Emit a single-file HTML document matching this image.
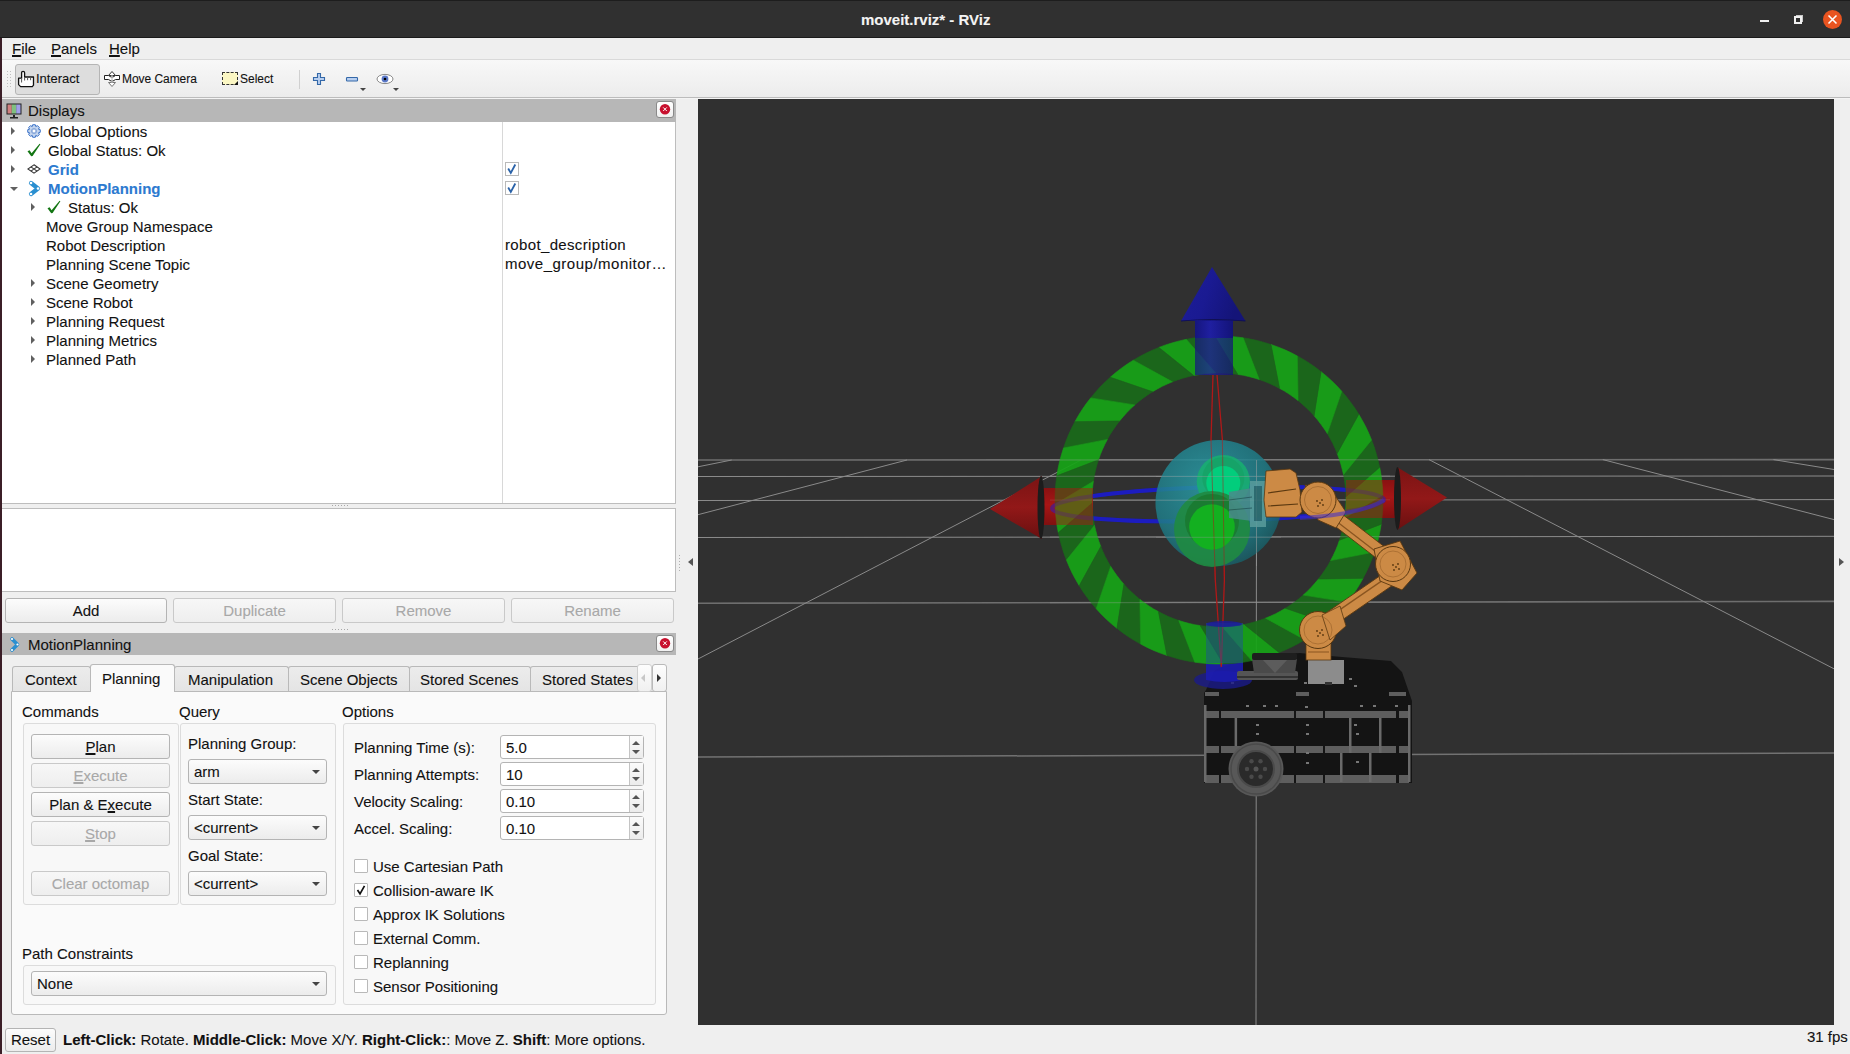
<!DOCTYPE html>
<html><head><meta charset="utf-8"><style>
*{box-sizing:border-box;margin:0;padding:0}
html,body{width:1850px;height:1054px;overflow:hidden;background:#efefef;font-family:"Liberation Sans",sans-serif;color:#111;-webkit-text-stroke:0.1px currentColor}
.a{position:absolute}
.t{position:absolute;white-space:nowrap;font-size:15px;line-height:18px;-webkit-text-stroke:0.1px currentColor}
.ts{position:absolute;white-space:nowrap;font-size:13px;line-height:18px}
u{text-decoration:underline;text-decoration-thickness:2px;text-underline-offset:1px;text-decoration-skip-ink:none}
.btn{position:absolute;background:linear-gradient(#fcfcfc,#ececec);border:1px solid #b4b4b4;border-radius:3px;font-size:15px;text-align:center;line-height:23px;white-space:nowrap;color:#111}
.dis{color:#a8a8a8;border-color:#c9c9c9;background:linear-gradient(#f7f7f7,#eeeeee)}
.dis u{text-decoration-color:#a8a8a8}
.combo{position:absolute;background:linear-gradient(#fcfcfc,#ececec);border:1px solid #b4b4b4;border-radius:3px;font-size:15px;line-height:23px;padding-left:5px;color:#111;white-space:nowrap}
.combo i{position:absolute;right:6px;top:10px;width:0;height:0;border-left:4px solid transparent;border-right:4px solid transparent;border-top:4px solid #444}
.spin{position:absolute;background:#fff;border:1px solid #b4b4b4;border-radius:3px;font-size:15px;line-height:23px;padding-left:5px;color:#111}
.spin b{position:absolute;right:0;top:0;width:14px;height:100%;border-left:1px solid #c4c4c4;background:linear-gradient(#fbfbfb,#ececec)}
.spin b:before{content:"";position:absolute;left:2px;top:5px;border-left:4px solid transparent;border-right:4px solid transparent;border-bottom:4px solid #555}
.spin b:after{content:"";position:absolute;left:2px;top:14px;border-left:4px solid transparent;border-right:4px solid transparent;border-top:4px solid #555}
.cb{position:absolute;width:14px;height:14px;border:1px solid #b9b9b9;background:#fff;border-radius:1px}
.gb{position:absolute;border:1px solid #dcdcdc;border-radius:3px;background:#f8f8f8}
.ar{position:absolute;width:0;height:0;border-top:4px solid transparent;border-bottom:4px solid transparent;border-left:4px solid #606060}
.ad{position:absolute;width:0;height:0;border-left:4px solid transparent;border-right:4px solid transparent;border-top:4px solid #606060}
.tab{position:absolute;top:666px;height:25px;background:linear-gradient(#ececec,#e4e4e4);border:1px solid #b9b9b9;border-bottom:none;border-radius:3px 3px 0 0}
</style></head><body>
<div class="a" style="left:0;top:0;width:2px;height:1054px;background:#3b1e27"></div>
<div class="a" style="left:0;top:0;width:1850px;height:38px;background:#303030;border-top:1px solid #1d1d1d;border-bottom:1px solid #1a1a1a"></div>
<div class="t" style="left:861px;top:11px;color:#f4f4f4;font-weight:bold">moveit.rviz* - RViz</div>
<div class="a" style="left:1760px;top:20px;width:9px;height:2px;background:#f0f0f0"></div>
<div class="a" style="left:1794px;top:16px;width:8px;height:8px;border:2px solid #f0f0f0"></div>
<div class="a" style="left:1796px;top:15px;width:7px;height:7px;border-top:1px solid #c8c8c8;border-right:1px solid #c8c8c8"></div>
<div class="a" style="left:1823px;top:10px;width:19px;height:19px;border-radius:50%;background:#e95420"></div>
<svg class="a" style="left:1823px;top:10px" width="19" height="19"><path d="M5.5 5.5L13.5 13.5M13.5 5.5L5.5 13.5" stroke="#fff" stroke-width="1.6"/></svg>
<div class="a" style="left:2px;top:38px;width:1848px;height:21px;background:#efefef"></div>
<div class="a" style="left:2px;top:59px;width:1848px;height:1px;background:#d9d9d9"></div>
<div class="t" style="left:12px;top:40px;"><u>F</u>ile</div>
<div class="t" style="left:51px;top:40px;"><u>P</u>anels</div>
<div class="t" style="left:109px;top:40px;"><u>H</u>elp</div>
<div class="a" style="left:2px;top:60px;width:1848px;height:37px;background:linear-gradient(#f8f8f8,#ececec)"></div>
<div class="a" style="left:2px;top:97px;width:1848px;height:1px;background:#bcbcbc"></div>
<div class="a" style="left:2px;top:98px;width:1848px;height:1px;background:#f4f4f4"></div>
<div class="a" style="left:7px;top:71px;width:1px;height:1px;background:#c0c0c0"></div>
<div class="a" style="left:10px;top:71px;width:1px;height:1px;background:#c0c0c0"></div>
<div class="a" style="left:7px;top:74px;width:1px;height:1px;background:#c0c0c0"></div>
<div class="a" style="left:10px;top:74px;width:1px;height:1px;background:#c0c0c0"></div>
<div class="a" style="left:7px;top:77px;width:1px;height:1px;background:#c0c0c0"></div>
<div class="a" style="left:10px;top:77px;width:1px;height:1px;background:#c0c0c0"></div>
<div class="a" style="left:7px;top:80px;width:1px;height:1px;background:#c0c0c0"></div>
<div class="a" style="left:10px;top:80px;width:1px;height:1px;background:#c0c0c0"></div>
<div class="a" style="left:7px;top:83px;width:1px;height:1px;background:#c0c0c0"></div>
<div class="a" style="left:10px;top:83px;width:1px;height:1px;background:#c0c0c0"></div>
<div class="a" style="left:7px;top:86px;width:1px;height:1px;background:#c0c0c0"></div>
<div class="a" style="left:10px;top:86px;width:1px;height:1px;background:#c0c0c0"></div>
<div class="a" style="left:15px;top:64px;width:85px;height:31px;background:#dddddd;border:1px solid #b5b5b5;border-radius:3px"></div>
<svg class="a" style="left:17px;top:70px" width="19" height="19"><path d="M4.6 8.5 V2.8 Q4.6 1.3 6.1 1.3 Q7.6 1.3 7.6 2.8 V7 H16.5 V15.2 L15.3 16.6 H3.6 L1.6 14.6 V8.2 H4.6" fill="#fff" stroke="#111" stroke-width="1.3" stroke-linejoin="round"/><path d="M4.6 8.2 V12.5 M7.6 7 V10.5 M10.6 7 V10.2 M13.6 7 V10.2" stroke="#555" stroke-width="1" fill="none"/></svg>
<div class="ts" style="left:36px;top:70px;color:#111">Interact</div>
<svg class="a" style="left:100px;top:66px" width="24" height="26"><path d="M8.5 16.5 L12 20.5 L15.5 16.5 Z" fill="#fff" stroke="#777" stroke-width="1"/><path d="M8.5 9.5 L12 5.5 L15.5 9.5 Z" fill="#fff" stroke="#333" stroke-width="1"/><path d="M4.5 9.5 L8.5 9.5 L11 11 L13 11 L15.5 9.5 L19.5 9.5 L19.5 13.5 L15.5 13.5 L13 15 L11 15 L8.5 13.5 L4.5 13.5 Z" fill="#fff" stroke="#222" stroke-width="1"/><path d="M12 9 V17" stroke="#bbb" stroke-width="1.2"/></svg>
<div class="ts" style="left:122px;top:70px;color:#111;font-size:12px;letter-spacing:-0.05px">Move Camera</div>
<div class="a" style="left:222px;top:72px;width:16px;height:13px;background:#fbf7c4;border:1px dashed #333"></div>
<div class="a" style="left:234px;top:81px;width:0;height:0;border-left:4px solid transparent;border-bottom:4px solid #111"></div>
<div class="ts" style="left:240px;top:70px;color:#111;font-size:12px">Select</div>
<div class="a" style="left:299px;top:70px;width:1px;height:19px;background:#d0d0d0"></div>
<svg class="a" style="left:312px;top:72px" width="15" height="15"><path d="M5.5 1.5h3v4h4v3h-4v4h-3v-4h-4v-3h4z" fill="#b8cff0" stroke="#3468a8" stroke-width="1.1"/></svg>
<svg class="a" style="left:345px;top:76px" width="15" height="7"><rect x="1.5" y="1.5" width="11" height="3.5" rx=".8" fill="#b8cff0" stroke="#3468a8" stroke-width="1.1"/></svg>
<div class="a" style="left:360px;top:88px;width:0;height:0;border-left:3px solid transparent;border-right:3px solid transparent;border-top:3px solid #444"></div>
<svg class="a" style="left:376px;top:73px" width="18" height="12"><ellipse cx="9" cy="6" rx="8" ry="4.6" fill="#fff" stroke="#888" stroke-width="1"/><circle cx="9" cy="6" r="3.4" fill="#5a78c8"/><circle cx="9" cy="6" r="1.3" fill="#000"/></svg>
<div class="a" style="left:393px;top:88px;width:0;height:0;border-left:3px solid transparent;border-right:3px solid transparent;border-top:3px solid #444"></div>
<div class="a" style="left:2px;top:99px;width:674px;height:23px;background:#b7b7b7"></div>
<svg class="a" style="left:6px;top:103px" width="17" height="16"><rect x="0.5" y="0.5" width="15" height="11" fill="#222"/><rect x="1.5" y="1.5" width="4.3" height="9" fill="#d08080"/><rect x="5.8" y="1.5" width="4.4" height="9" fill="#80c080"/><rect x="10.2" y="1.5" width="4.3" height="9" fill="#a0a0e8"/><rect x="7" y="12" width="2" height="2" fill="#222"/><rect x="4" y="14" width="8" height="1.5" fill="#222"/></svg>
<div class="t" style="left:28px;top:102px;">Displays</div>
<div class="a" style="left:656px;top:101px;width:18px;height:17px;background:linear-gradient(#fff,#f0f0f0);border:1px solid #8a8a8a;border-radius:3px"></div>
<svg class="a" style="left:656px;top:101px" width="18" height="17"><circle cx="9" cy="8.2" r="5.2" fill="#c8102e"/><path d="M7.2 6.4l3.6 3.6M10.8 6.4l-3.6 3.6" stroke="#fff" stroke-width="1"/></svg>
<div class="a" style="left:2px;top:122px;width:674px;height:382px;background:#fff;border-right:1px solid #bdbdbd;border-bottom:1px solid #bdbdbd"></div>
<div class="a" style="left:502px;top:122px;width:1px;height:381px;background:#d8d8d8"></div>
<div class="t" style="left:48px;top:123px;">Global Options</div>
<div class="ar" style="left:11px;top:127px"></div>
<div class="t" style="left:48px;top:142px;">Global Status: Ok</div>
<div class="ar" style="left:11px;top:146px"></div>
<div class="t" style="left:48px;top:161px;color:#2c7ad0;font-weight:bold">Grid</div>
<div class="ar" style="left:11px;top:165px"></div>
<div class="t" style="left:48px;top:180px;color:#2c7ad0;font-weight:bold">MotionPlanning</div>
<div class="ad" style="left:10px;top:187px"></div>
<div class="t" style="left:68px;top:199px;">Status: Ok</div>
<div class="ar" style="left:31px;top:203px"></div>
<div class="t" style="left:46px;top:218px;">Move Group Namespace</div>
<div class="t" style="left:46px;top:237px;">Robot Description</div>
<div class="t" style="left:46px;top:256px;">Planning Scene Topic</div>
<div class="t" style="left:46px;top:275px;">Scene Geometry</div>
<div class="ar" style="left:31px;top:279px"></div>
<div class="t" style="left:46px;top:294px;">Scene Robot</div>
<div class="ar" style="left:31px;top:298px"></div>
<div class="t" style="left:46px;top:313px;">Planning Request</div>
<div class="ar" style="left:31px;top:317px"></div>
<div class="t" style="left:46px;top:332px;">Planning Metrics</div>
<div class="ar" style="left:31px;top:336px"></div>
<div class="t" style="left:46px;top:351px;">Planned Path</div>
<div class="ar" style="left:31px;top:355px"></div>
<svg class="a" style="left:27px;top:124px" width="14" height="14"><path d="M11.42 5.14 L13.26 5.67 L13.26 8.33 L11.42 8.86 L11.44 8.81 L12.37 10.49 L10.49 12.37 L8.81 11.44 L8.86 11.42 L8.33 13.26 L5.67 13.26 L5.14 11.42 L5.19 11.44 L3.51 12.37 L1.63 10.49 L2.56 8.81 L2.58 8.86 L0.74 8.33 L0.74 5.67 L2.58 5.14 L2.56 5.19 L1.63 3.51 L3.51 1.63 L5.19 2.56 L5.14 2.58 L5.67 0.74 L8.33 0.74 L8.86 2.58 L8.81 2.56 L10.49 1.63 L12.37 3.51 L11.44 5.19Z" fill="#c2d4ee" stroke="#3a72c8" stroke-width="1" stroke-linejoin="round"/><circle cx="7" cy="7" r="2.6" fill="#a8bfe4" stroke="#6a90d0" stroke-width="0.6"/><circle cx="7" cy="7" r="1.2" fill="#fff"/></svg>
<svg class="a" style="left:27px;top:143px" width="14" height="14"><path d="M0.5 8.2 L2.6 7.2 L4.6 10.2 L12.6 0.8 L13.4 1.3 L5.6 12.9 L4.2 13.2 Z" fill="#127512"/></svg>
<svg class="a" style="left:47px;top:200px" width="14" height="14"><path d="M0.5 8.2 L2.6 7.2 L4.6 10.2 L12.6 0.8 L13.4 1.3 L5.6 12.9 L4.2 13.2 Z" fill="#127512"/></svg>
<svg class="a" style="left:27px;top:164px" width="14" height="10"><g fill="none" stroke="#333" stroke-width="1.1"><path d="M7 0.8L13.2 5 7 9.2 0.8 5z"/><path d="M3.9 2.9L10.1 7.1M10.1 2.9L3.9 7.1"/></g></svg>
<svg class="a" style="left:28px;top:180px" width="14" height="17"><path d="M3 3L10 8.5 3 14" fill="none" stroke="#2a8fd0" stroke-width="4.2" stroke-linecap="round" stroke-linejoin="round"/><circle cx="3" cy="3" r="1.3" fill="#fff"/><circle cx="10" cy="8.5" r="1.3" fill="#fff"/><circle cx="3" cy="14" r="1.3" fill="#fff"/></svg>
<div class="a" style="left:505px;top:162px;width:14px;height:14px;border:1px solid #b9b9b9;background:#fff"></div>
<svg class="a" style="left:505px;top:162px" width="14" height="14"><path d="M3.2 6.5l2.6 4.5 4.5-8.5" fill="none" stroke="#2a62a8" stroke-width="1.8"/></svg>
<div class="a" style="left:505px;top:181px;width:14px;height:14px;border:1px solid #b9b9b9;background:#fff"></div>
<svg class="a" style="left:505px;top:181px" width="14" height="14"><path d="M3.2 6.5l2.6 4.5 4.5-8.5" fill="none" stroke="#2a62a8" stroke-width="1.8"/></svg>
<div class="t" style="left:505px;top:236px;letter-spacing:0.35px">robot_description</div>
<div class="t" style="left:505px;top:255px;letter-spacing:0.5px">move_group/monitor…</div>
<div class="a" style="left:332px;top:505px;width:1px;height:1px;background:#a8a8a8"></div>
<div class="a" style="left:332px;top:629px;width:1px;height:1px;background:#a8a8a8"></div>
<div class="a" style="left:335px;top:505px;width:1px;height:1px;background:#a8a8a8"></div>
<div class="a" style="left:335px;top:629px;width:1px;height:1px;background:#a8a8a8"></div>
<div class="a" style="left:338px;top:505px;width:1px;height:1px;background:#a8a8a8"></div>
<div class="a" style="left:338px;top:629px;width:1px;height:1px;background:#a8a8a8"></div>
<div class="a" style="left:341px;top:505px;width:1px;height:1px;background:#a8a8a8"></div>
<div class="a" style="left:341px;top:629px;width:1px;height:1px;background:#a8a8a8"></div>
<div class="a" style="left:344px;top:505px;width:1px;height:1px;background:#a8a8a8"></div>
<div class="a" style="left:344px;top:629px;width:1px;height:1px;background:#a8a8a8"></div>
<div class="a" style="left:347px;top:505px;width:1px;height:1px;background:#a8a8a8"></div>
<div class="a" style="left:347px;top:629px;width:1px;height:1px;background:#a8a8a8"></div>
<div class="a" style="left:2px;top:508px;width:674px;height:84px;background:#fff;border:1px solid #bdbdbd;border-left:none"></div>
<div class="btn" style="left:5px;top:598px;width:162px;height:25px">Add</div>
<div class="btn dis" style="left:173px;top:598px;width:163px;height:25px">Duplicate</div>
<div class="btn dis" style="left:342px;top:598px;width:163px;height:25px">Remove</div>
<div class="btn dis" style="left:511px;top:598px;width:163px;height:25px">Rename</div>
<div class="a" style="left:2px;top:633px;width:674px;height:22px;background:#b7b7b7"></div>
<svg class="a" style="left:9px;top:636px" width="12" height="17"><path d="M3 3L8.5 8.5 3 14" fill="none" stroke="#2a8fd0" stroke-width="3.6" stroke-linecap="round" stroke-linejoin="round"/><circle cx="3" cy="3" r="1.1" fill="#fff"/><circle cx="8.5" cy="8.5" r="1.1" fill="#fff"/><circle cx="3" cy="14" r="1.1" fill="#fff"/></svg>
<div class="t" style="left:28px;top:636px;">MotionPlanning</div>
<div class="a" style="left:656px;top:635px;width:18px;height:17px;background:linear-gradient(#fff,#f0f0f0);border:1px solid #8a8a8a;border-radius:3px"></div>
<svg class="a" style="left:656px;top:635px" width="18" height="17"><circle cx="9" cy="8.2" r="5.2" fill="#c8102e"/><path d="M7.2 6.4l3.6 3.6M10.8 6.4l-3.6 3.6" stroke="#fff" stroke-width="1"/></svg>
<div class="a" style="left:11px;top:691px;width:656px;height:324px;background:#fafafa;border:1px solid #b9b9b9;border-radius:0 0 3px 3px"></div>
<div class="tab" style="left:12px;width:79px"></div>
<div class="t" style="left:25px;top:671px;">Context</div>
<div class="tab" style="left:174px;width:115px"></div>
<div class="t" style="left:188px;top:671px;">Manipulation</div>
<div class="tab" style="left:288px;width:122px"></div>
<div class="t" style="left:300px;top:671px;">Scene Objects</div>
<div class="tab" style="left:409px;width:122px"></div>
<div class="t" style="left:420px;top:671px;">Stored Scenes</div>
<div class="tab" style="left:530px;width:111px"></div>
<div class="t" style="left:542px;top:671px;">Stored States</div>
<div class="a" style="left:90px;top:664px;width:85px;height:28px;background:#fafafa;border:1px solid #b9b9b9;border-bottom:none;border-radius:3px 3px 0 0"></div>
<div class="t" style="left:102px;top:670px;">Planning</div>
<div class="a" style="left:637px;top:664px;width:15px;height:28px;background:linear-gradient(#fdfdfd,#f0f0f0);border:1px solid #d0d0d0;border-radius:3px"></div>
<div class="a" style="left:641px;top:674px;border-top:4px solid transparent;border-bottom:4px solid transparent;border-right:4px solid #c8c8c8"></div>
<div class="a" style="left:652px;top:664px;width:15px;height:28px;background:linear-gradient(#fdfdfd,#f0f0f0);border:1px solid #b9b9b9;border-radius:3px"></div>
<div class="a" style="left:657px;top:674px;border-top:4px solid transparent;border-bottom:4px solid transparent;border-left:4px solid #333"></div>
<div class="t" style="left:22px;top:703px;">Commands</div>
<div class="t" style="left:179px;top:703px;">Query</div>
<div class="t" style="left:342px;top:703px;">Options</div>
<div class="gb" style="left:23px;top:723px;width:156px;height:182px"></div>
<div class="gb" style="left:180px;top:723px;width:156px;height:182px"></div>
<div class="gb" style="left:343px;top:723px;width:313px;height:282px"></div>
<div class="btn" style="left:31px;top:734px;width:139px;height:25px"><u>P</u>lan</div>
<div class="btn dis" style="left:31px;top:763px;width:139px;height:25px"><u>E</u>xecute</div>
<div class="btn" style="left:31px;top:792px;width:139px;height:25px">Plan &amp; E<u>x</u>ecute</div>
<div class="btn dis" style="left:31px;top:821px;width:139px;height:25px"><u>S</u>top</div>
<div class="btn dis" style="left:31px;top:871px;width:139px;height:25px">Clear octomap</div>
<div class="t" style="left:188px;top:735px;">Planning Group:</div>
<div class="combo" style="left:188px;top:759px;width:139px;height:25px">arm<i></i></div>
<div class="t" style="left:188px;top:791px;">Start State:</div>
<div class="combo" style="left:188px;top:815px;width:139px;height:25px">&lt;current&gt;<i></i></div>
<div class="t" style="left:188px;top:847px;">Goal State:</div>
<div class="combo" style="left:188px;top:871px;width:139px;height:25px">&lt;current&gt;<i></i></div>
<div class="t" style="left:22px;top:945px;">Path Constraints</div>
<div class="gb" style="left:23px;top:965px;width:313px;height:40px"></div>
<div class="combo" style="left:31px;top:971px;width:296px;height:25px">None<i></i></div>
<div class="t" style="left:354px;top:739px;">Planning Time (s):</div>
<div class="spin" style="left:500px;top:735px;width:144px;height:24px">5.0<b></b></div>
<div class="t" style="left:354px;top:766px;">Planning Attempts:</div>
<div class="spin" style="left:500px;top:762px;width:144px;height:24px">10<b></b></div>
<div class="t" style="left:354px;top:793px;">Velocity Scaling:</div>
<div class="spin" style="left:500px;top:789px;width:144px;height:24px">0.10<b></b></div>
<div class="t" style="left:354px;top:820px;">Accel. Scaling:</div>
<div class="spin" style="left:500px;top:816px;width:144px;height:24px">0.10<b></b></div>
<div class="cb" style="left:354px;top:859px"></div>
<div class="t" style="left:373px;top:858px;">Use Cartesian Path</div>
<div class="cb" style="left:354px;top:883px"></div>
<svg class="a" style="left:354px;top:883px" width="14" height="14"><path d="M3.5 7l2.5 3.8 4.5-8" fill="none" stroke="#111" stroke-width="1.7"/></svg>
<div class="t" style="left:373px;top:882px;">Collision-aware IK</div>
<div class="cb" style="left:354px;top:907px"></div>
<div class="t" style="left:373px;top:906px;">Approx IK Solutions</div>
<div class="cb" style="left:354px;top:931px"></div>
<div class="t" style="left:373px;top:930px;">External Comm.</div>
<div class="cb" style="left:354px;top:955px"></div>
<div class="t" style="left:373px;top:954px;">Replanning</div>
<div class="cb" style="left:354px;top:979px"></div>
<div class="t" style="left:373px;top:978px;">Sensor Positioning</div>
<div class="btn" style="left:5px;top:1028px;width:51px;height:24px;line-height:22px">Reset</div>
<div class="t" style="left:63px;top:1031px"><b>Left-Click:</b> Rotate. <b>Middle-Click:</b> Move X/Y. <b>Right-Click:</b>: Move Z. <b>Shift</b>: More options.</div>
<div class="t" style="left:1807px;top:1028px">31 fps</div>
<div class="a" style="left:688px;top:558px;border-top:4px solid transparent;border-bottom:4px solid transparent;border-right:5px solid #555"></div>
<div class="a" style="left:679px;top:555px;width:1px;height:1px;background:#b0b0b0"></div>
<div class="a" style="left:679px;top:558px;width:1px;height:1px;background:#b0b0b0"></div>
<div class="a" style="left:679px;top:561px;width:1px;height:1px;background:#b0b0b0"></div>
<div class="a" style="left:679px;top:564px;width:1px;height:1px;background:#b0b0b0"></div>
<div class="a" style="left:679px;top:567px;width:1px;height:1px;background:#b0b0b0"></div>
<div class="a" style="left:679px;top:570px;width:1px;height:1px;background:#b0b0b0"></div>
<div class="a" style="left:1839px;top:558px;border-top:4px solid transparent;border-bottom:4px solid transparent;border-left:5px solid #555"></div>
<svg class="a" style="left:698px;top:99px" width="1136" height="926" viewBox="698 99 1136 926">
<defs><radialGradient id="sph" cx="0.42" cy="0.36" r="0.68"><stop offset="0" stop-color="#2b9ca6"/><stop offset="0.7" stop-color="#1f7a85"/><stop offset="1" stop-color="#185a62"/></radialGradient><linearGradient id="redc" x1="0" y1="0" x2="0" y2="1"><stop offset="0" stop-color="#7a1414"/><stop offset="0.5" stop-color="#921818"/><stop offset="1" stop-color="#681010"/></linearGradient><linearGradient id="reds" x1="0" y1="0" x2="0" y2="1"><stop offset="0" stop-color="#6a1010"/><stop offset="0.45" stop-color="#a01818"/><stop offset="1" stop-color="#5a0d0d"/></linearGradient><linearGradient id="blu" x1="0" y1="0" x2="1" y2="0"><stop offset="0" stop-color="#15157e"/><stop offset="0.4" stop-color="#1f1fa0"/><stop offset="1" stop-color="#131378"/></linearGradient><linearGradient id="bluc" x1="0" y1="0" x2="1" y2="0.3"><stop offset="0" stop-color="#1d1d98"/><stop offset="0.5" stop-color="#1a1a92"/><stop offset="1" stop-color="#141478"/></linearGradient></defs>
<rect x="698" y="99" width="1136" height="926" fill="#303030"/>
<line x1="698" y1="460.0" x2="1834" y2="459.6" stroke="#6e6e6e" stroke-width="1.6" fill="none"/>
<line x1="698" y1="476.5" x2="1834" y2="476.0" stroke="#8c8c8c" stroke-width="1" fill="none"/>
<line x1="698" y1="500.5" x2="1834" y2="499.6" stroke="#8c8c8c" stroke-width="1" fill="none"/>
<line x1="698" y1="537.5" x2="1834" y2="536.3" stroke="#8c8c8c" stroke-width="1" fill="none"/>
<line x1="698" y1="603.2" x2="1834" y2="601.4" stroke="#6e6e6e" stroke-width="1.6" fill="none"/>
<line x1="698" y1="757" x2="1834" y2="753" stroke="#727272" stroke-width="1.5" fill="none"/>
<line x1="698" y1="466.8" x2="731.7" y2="460" stroke="#8a8a8a" stroke-width="1" fill="none"/>
<line x1="698" y1="514.7" x2="907" y2="460" stroke="#8a8a8a" stroke-width="1" fill="none"/>
<line x1="698" y1="659" x2="1081" y2="460" stroke="#8a8a8a" stroke-width="1" fill="none"/>
<line x1="1256.5" y1="460" x2="1256" y2="1025" stroke="#8a8a8a" stroke-width="1" fill="none"/>
<line x1="1429" y1="459.6" x2="1834" y2="668.8" stroke="#8a8a8a" stroke-width="1" fill="none"/>
<line x1="1602.8" y1="459.6" x2="1834" y2="519.6" stroke="#8a8a8a" stroke-width="1" fill="none"/>
<line x1="1773.4" y1="459.6" x2="1834" y2="469.5" stroke="#8a8a8a" stroke-width="1" fill="none"/>
<g>
<path d="M1204 693 L1204 783 L1412 783 L1412 701 L1402 672 L1391 661 L1330 656 L1300 653 L1250 656 L1215 670 L1206 690 Z" fill="#141414"/>
<rect x="1205" y="692" width="14" height="4" fill="#5e5e5e"/>
<rect x="1296" y="692" width="13" height="4" fill="#5e5e5e"/>
<rect x="1389" y="692" width="17" height="4" fill="#5e5e5e"/>
<rect x="1205" y="711" width="14" height="7" fill="#5e5e5e"/>
<rect x="1221" y="711" width="73" height="7" fill="#5e5e5e"/>
<rect x="1296" y="711" width="27" height="7" fill="#5e5e5e"/>
<rect x="1325" y="711" width="71" height="7" fill="#5e5e5e"/>
<rect x="1399" y="711" width="10" height="7" fill="#5e5e5e"/>
<rect x="1205" y="746" width="14" height="7" fill="#5e5e5e"/>
<rect x="1221" y="746" width="73" height="7" fill="#5e5e5e"/>
<rect x="1296" y="746" width="27" height="7" fill="#5e5e5e"/>
<rect x="1325" y="746" width="71" height="7" fill="#5e5e5e"/>
<rect x="1399" y="746" width="10" height="7" fill="#5e5e5e"/>
<rect x="1205" y="775" width="14" height="8" fill="#5e5e5e"/>
<rect x="1221" y="775" width="73" height="8" fill="#5e5e5e"/>
<rect x="1296" y="775" width="27" height="8" fill="#5e5e5e"/>
<rect x="1325" y="775" width="71" height="8" fill="#5e5e5e"/>
<rect x="1399" y="775" width="10" height="8" fill="#5e5e5e"/>
<rect x="1234.6" y="718" width="2.5" height="28" fill="#6a6a6a"/>
<rect x="1349" y="718" width="2.5" height="35" fill="#6a6a6a"/>
<rect x="1379" y="718" width="2.5" height="35" fill="#6a6a6a"/>
<rect x="1340" y="753" width="2.5" height="29" fill="#6a6a6a"/>
<rect x="1369" y="753" width="2.5" height="29" fill="#6a6a6a"/>
<rect x="1204" y="705" width="2.5" height="77" fill="#6a6a6a"/>
<rect x="1408" y="705" width="2.5" height="77" fill="#6a6a6a"/>
<rect x="1246" y="705" width="3" height="2" fill="#777"/>
<rect x="1263" y="705" width="3" height="2" fill="#777"/>
<rect x="1275" y="705" width="3" height="2" fill="#777"/>
<rect x="1305" y="706" width="3" height="2" fill="#777"/>
<rect x="1360" y="705" width="3" height="2" fill="#777"/>
<rect x="1373" y="705" width="3" height="2" fill="#777"/>
<rect x="1395" y="705" width="3" height="2" fill="#777"/>
<rect x="1256" y="724" width="3" height="2" fill="#777"/>
<rect x="1306" y="724" width="3" height="2" fill="#777"/>
<rect x="1354" y="724" width="3" height="2" fill="#777"/>
<rect x="1256" y="733" width="3" height="2" fill="#777"/>
<rect x="1306" y="733" width="3" height="2" fill="#777"/>
<rect x="1356" y="733" width="3" height="2" fill="#777"/>
<rect x="1306" y="752" width="3" height="2" fill="#777"/>
<rect x="1306" y="762" width="3" height="2" fill="#777"/>
<rect x="1356" y="761" width="3" height="2" fill="#777"/>
<rect x="1231" y="682" width="3" height="2" fill="#777"/>
<rect x="1304" y="682" width="3" height="2" fill="#777"/>
<rect x="1354" y="685" width="3" height="2" fill="#777"/>
<rect x="1349" y="678" width="3" height="2" fill="#777"/>
<rect x="1308" y="660" width="36" height="24" fill="#8c8c8c"/>
<rect x="1325" y="682" width="7" height="3" fill="#333"/>
<ellipse cx="1223" cy="680" rx="29" ry="9" fill="#1a1a8a" opacity="0.8"/>
<path d="M1206 662 L1243 662 L1243 680 Q1224 684 1206 680 Z" fill="#1c1cb0" opacity="0.9"/>
<circle cx="1256" cy="769" r="27.5" fill="#585858"/>
<circle cx="1256" cy="769" r="25" fill="none" stroke="#4a4a4a" stroke-width="1.5"/>
<circle cx="1256" cy="769" r="18" fill="#2a2a2a" stroke="#4a4a4a" stroke-width="2"/>
<circle cx="1265.0" cy="769.0" r="2.2" fill="#4a4a4a"/>
<circle cx="1260.5" cy="776.8" r="2.2" fill="#4a4a4a"/>
<circle cx="1251.5" cy="776.8" r="2.2" fill="#4a4a4a"/>
<circle cx="1247.0" cy="769.0" r="2.2" fill="#4a4a4a"/>
<circle cx="1251.5" cy="761.2" r="2.2" fill="#4a4a4a"/>
<circle cx="1260.5" cy="761.2" r="2.2" fill="#4a4a4a"/>
<circle cx="1256" cy="769" r="2.5" fill="#555"/>
</g>
<rect x="1041" y="488" width="52" height="37" fill="url(#reds)"/>
<rect x="1346" y="480" width="51" height="38" fill="url(#reds)"/>
<ellipse cx="1218" cy="504" rx="166" ry="17" fill="none" stroke="#1d1dc0" stroke-width="4" transform="rotate(-1.5 1218 504)"/>
<g opacity="0.93">
<path d="M1382.9 495.7 L1382.6 488.6 L1381.9 481.4 L1381.0 474.3 L1379.7 467.3 L1346.0 496.7 L1346.0 502.2 L1345.8 507.8 L1345.3 513.3 L1344.6 518.8Z" fill="#17a417" stroke="#17a417" stroke-width="0.6"/>
<path d="M1379.7 467.3 L1378.1 460.3 L1376.2 453.4 L1374.1 446.6 L1371.6 439.9 L1343.5 474.7 L1344.4 480.1 L1345.2 485.6 L1345.7 491.1 L1346.0 496.7Z" fill="#1a6b1a" stroke="#1a6b1a" stroke-width="0.6"/>
<path d="M1371.6 439.9 L1368.8 433.3 L1365.8 426.8 L1362.4 420.5 L1358.8 414.3 L1337.2 453.5 L1339.1 458.7 L1340.8 463.9 L1342.2 469.3 L1343.5 474.7Z" fill="#17a417" stroke="#17a417" stroke-width="0.6"/>
<path d="M1358.8 414.3 L1355.0 408.3 L1350.8 402.4 L1346.5 396.8 L1341.8 391.3 L1327.3 433.6 L1330.1 438.4 L1332.7 443.3 L1335.0 448.3 L1337.2 453.5Z" fill="#1a6b1a" stroke="#1a6b1a" stroke-width="0.6"/>
<path d="M1341.8 391.3 L1337.0 386.1 L1331.9 381.0 L1326.6 376.2 L1321.1 371.7 L1314.1 415.8 L1317.7 420.1 L1321.1 424.5 L1324.3 429.0 L1327.3 433.6Z" fill="#17a417" stroke="#17a417" stroke-width="0.6"/>
<path d="M1321.1 371.7 L1315.4 367.3 L1309.5 363.2 L1303.5 359.4 L1297.3 355.9 L1298.1 400.6 L1302.3 404.2 L1306.4 407.9 L1310.4 411.8 L1314.1 415.8Z" fill="#1a6b1a" stroke="#1a6b1a" stroke-width="0.6"/>
<path d="M1297.3 355.9 L1290.9 352.6 L1284.4 349.6 L1277.8 346.9 L1271.0 344.5 L1279.6 388.4 L1284.4 391.1 L1289.1 394.1 L1293.6 397.3 L1298.1 400.6Z" fill="#17a417" stroke="#17a417" stroke-width="0.6"/>
<path d="M1271.0 344.5 L1264.2 342.4 L1257.3 340.5 L1250.3 339.0 L1243.2 337.8 L1259.3 379.6 L1264.5 381.4 L1269.6 383.5 L1274.7 385.9 L1279.6 388.4Z" fill="#1a6b1a" stroke="#1a6b1a" stroke-width="0.6"/>
<path d="M1243.2 337.8 L1236.1 336.9 L1229.0 336.3 L1221.9 336.0 L1214.7 336.1 L1237.8 374.4 L1243.2 375.3 L1248.6 376.5 L1254.0 377.9 L1259.3 379.6Z" fill="#17a417" stroke="#17a417" stroke-width="0.6"/>
<path d="M1214.7 336.1 L1207.6 336.4 L1200.4 337.1 L1193.3 338.0 L1186.3 339.3 L1215.7 373.0 L1221.2 373.0 L1226.8 373.2 L1232.3 373.7 L1237.8 374.4Z" fill="#1a6b1a" stroke="#1a6b1a" stroke-width="0.6"/>
<path d="M1186.3 339.3 L1179.3 340.9 L1172.4 342.8 L1165.6 344.9 L1158.9 347.4 L1193.7 375.5 L1199.1 374.6 L1204.6 373.8 L1210.1 373.3 L1215.7 373.0Z" fill="#17a417" stroke="#17a417" stroke-width="0.6"/>
<path d="M1158.9 347.4 L1152.3 350.2 L1145.8 353.2 L1139.5 356.6 L1133.3 360.2 L1172.5 381.8 L1177.7 379.9 L1182.9 378.2 L1188.3 376.8 L1193.7 375.5Z" fill="#1a6b1a" stroke="#1a6b1a" stroke-width="0.6"/>
<path d="M1133.3 360.2 L1127.3 364.0 L1121.4 368.2 L1115.8 372.5 L1110.3 377.2 L1152.6 391.7 L1157.4 388.9 L1162.3 386.3 L1167.3 384.0 L1172.5 381.8Z" fill="#17a417" stroke="#17a417" stroke-width="0.6"/>
<path d="M1110.3 377.2 L1105.1 382.0 L1100.0 387.1 L1095.2 392.4 L1090.7 397.9 L1134.8 404.9 L1139.1 401.3 L1143.5 397.9 L1148.0 394.7 L1152.6 391.7Z" fill="#1a6b1a" stroke="#1a6b1a" stroke-width="0.6"/>
<path d="M1090.7 397.9 L1086.3 403.6 L1082.2 409.5 L1078.4 415.5 L1074.9 421.7 L1119.6 420.9 L1123.2 416.7 L1126.9 412.6 L1130.8 408.6 L1134.8 404.9Z" fill="#17a417" stroke="#17a417" stroke-width="0.6"/>
<path d="M1074.9 421.7 L1071.6 428.1 L1068.6 434.6 L1065.9 441.2 L1063.5 448.0 L1107.4 439.4 L1110.1 434.6 L1113.1 429.9 L1116.3 425.4 L1119.6 420.9Z" fill="#1a6b1a" stroke="#1a6b1a" stroke-width="0.6"/>
<path d="M1063.5 448.0 L1061.4 454.8 L1059.5 461.7 L1058.0 468.7 L1056.8 475.8 L1098.6 459.7 L1100.4 454.5 L1102.5 449.4 L1104.9 444.3 L1107.4 439.4Z" fill="#17a417" stroke="#17a417" stroke-width="0.6"/>
<path d="M1056.8 475.8 L1055.9 482.9 L1055.3 490.0 L1055.0 497.1 L1055.1 504.3 L1093.4 481.2 L1094.3 475.8 L1095.5 470.4 L1096.9 465.0 L1098.6 459.7Z" fill="#1a6b1a" stroke="#1a6b1a" stroke-width="0.6"/>
<path d="M1055.1 504.3 L1055.4 511.4 L1056.1 518.6 L1057.0 525.7 L1058.3 532.7 L1092.0 503.3 L1092.0 497.8 L1092.2 492.2 L1092.7 486.7 L1093.4 481.2Z" fill="#17a417" stroke="#17a417" stroke-width="0.6"/>
<path d="M1058.3 532.7 L1059.9 539.7 L1061.8 546.6 L1063.9 553.4 L1066.4 560.1 L1094.5 525.3 L1093.6 519.9 L1092.8 514.4 L1092.3 508.9 L1092.0 503.3Z" fill="#1a6b1a" stroke="#1a6b1a" stroke-width="0.6"/>
<path d="M1066.4 560.1 L1069.2 566.7 L1072.2 573.2 L1075.6 579.5 L1079.2 585.7 L1100.8 546.5 L1098.9 541.3 L1097.2 536.1 L1095.8 530.7 L1094.5 525.3Z" fill="#17a417" stroke="#17a417" stroke-width="0.6"/>
<path d="M1079.2 585.7 L1083.0 591.7 L1087.2 597.6 L1091.5 603.2 L1096.2 608.7 L1110.7 566.4 L1107.9 561.6 L1105.3 556.7 L1103.0 551.7 L1100.8 546.5Z" fill="#1a6b1a" stroke="#1a6b1a" stroke-width="0.6"/>
<path d="M1096.2 608.7 L1101.0 613.9 L1106.1 619.0 L1111.4 623.8 L1116.9 628.3 L1123.9 584.2 L1120.3 579.9 L1116.9 575.5 L1113.7 571.0 L1110.7 566.4Z" fill="#17a417" stroke="#17a417" stroke-width="0.6"/>
<path d="M1116.9 628.3 L1122.6 632.7 L1128.5 636.8 L1134.5 640.6 L1140.7 644.1 L1139.9 599.4 L1135.7 595.8 L1131.6 592.1 L1127.6 588.2 L1123.9 584.2Z" fill="#1a6b1a" stroke="#1a6b1a" stroke-width="0.6"/>
<path d="M1140.7 644.1 L1147.1 647.4 L1153.6 650.4 L1160.2 653.1 L1167.0 655.5 L1158.4 611.6 L1153.6 608.9 L1148.9 605.9 L1144.4 602.7 L1139.9 599.4Z" fill="#17a417" stroke="#17a417" stroke-width="0.6"/>
<path d="M1167.0 655.5 L1173.8 657.6 L1180.7 659.5 L1187.7 661.0 L1194.8 662.2 L1178.7 620.4 L1173.5 618.6 L1168.4 616.5 L1163.3 614.1 L1158.4 611.6Z" fill="#1a6b1a" stroke="#1a6b1a" stroke-width="0.6"/>
<path d="M1194.8 662.2 L1201.9 663.1 L1209.0 663.7 L1216.1 664.0 L1223.3 663.9 L1200.2 625.6 L1194.8 624.7 L1189.4 623.5 L1184.0 622.1 L1178.7 620.4Z" fill="#17a417" stroke="#17a417" stroke-width="0.6"/>
<path d="M1223.3 663.9 L1230.4 663.6 L1237.6 662.9 L1244.7 662.0 L1251.7 660.7 L1222.3 627.0 L1216.8 627.0 L1211.2 626.8 L1205.7 626.3 L1200.2 625.6Z" fill="#1a6b1a" stroke="#1a6b1a" stroke-width="0.6"/>
<path d="M1251.7 660.7 L1258.7 659.1 L1265.6 657.2 L1272.4 655.1 L1279.1 652.6 L1244.3 624.5 L1238.9 625.4 L1233.4 626.2 L1227.9 626.7 L1222.3 627.0Z" fill="#17a417" stroke="#17a417" stroke-width="0.6"/>
<path d="M1279.1 652.6 L1285.7 649.8 L1292.2 646.8 L1298.5 643.4 L1304.7 639.8 L1265.5 618.2 L1260.3 620.1 L1255.1 621.8 L1249.7 623.2 L1244.3 624.5Z" fill="#1a6b1a" stroke="#1a6b1a" stroke-width="0.6"/>
<path d="M1304.7 639.8 L1310.7 636.0 L1316.6 631.8 L1322.2 627.5 L1327.7 622.8 L1285.4 608.3 L1280.6 611.1 L1275.7 613.7 L1270.7 616.0 L1265.5 618.2Z" fill="#17a417" stroke="#17a417" stroke-width="0.6"/>
<path d="M1327.7 622.8 L1332.9 618.0 L1338.0 612.9 L1342.8 607.6 L1347.3 602.1 L1303.2 595.1 L1298.9 598.7 L1294.5 602.1 L1290.0 605.3 L1285.4 608.3Z" fill="#1a6b1a" stroke="#1a6b1a" stroke-width="0.6"/>
<path d="M1347.3 602.1 L1351.7 596.4 L1355.8 590.5 L1359.6 584.5 L1363.1 578.3 L1318.4 579.1 L1314.8 583.3 L1311.1 587.4 L1307.2 591.4 L1303.2 595.1Z" fill="#17a417" stroke="#17a417" stroke-width="0.6"/>
<path d="M1363.1 578.3 L1366.4 571.9 L1369.4 565.4 L1372.1 558.8 L1374.5 552.0 L1330.6 560.6 L1327.9 565.4 L1324.9 570.1 L1321.7 574.6 L1318.4 579.1Z" fill="#1a6b1a" stroke="#1a6b1a" stroke-width="0.6"/>
<path d="M1374.5 552.0 L1376.6 545.2 L1378.5 538.3 L1380.0 531.3 L1381.2 524.2 L1339.4 540.3 L1337.6 545.5 L1335.5 550.6 L1333.1 555.7 L1330.6 560.6Z" fill="#17a417" stroke="#17a417" stroke-width="0.6"/>
<path d="M1381.2 524.2 L1382.1 517.1 L1382.7 510.0 L1383.0 502.9 L1382.9 495.7 L1344.6 518.8 L1343.7 524.2 L1342.5 529.6 L1341.1 535.0 L1339.4 540.3Z" fill="#1a6b1a" stroke="#1a6b1a" stroke-width="0.6"/>
</g>
<rect x="1237" y="671" width="61" height="9" rx="2" fill="#555"/>
<rect x="1237" y="676" width="61" height="2" fill="#333"/>
<path d="M1252 659 L1297 659 L1295 673 L1254 673 Z" fill="#4a4a4a"/>
<path d="M1262 659 L1275 673 L1288 659 Z" fill="#5c5c5c"/>
<rect x="1252" y="653" width="45" height="7" rx="2" fill="#1e1e1e"/>
<line x1="1050" y1="460.0" x2="1390" y2="459.8" stroke="#9c9c9c" stroke-width="1" opacity="0.35"/>
<line x1="1050" y1="476.3" x2="1390" y2="476.1" stroke="#9c9c9c" stroke-width="1" opacity="0.35"/>
<line x1="1050" y1="500.1" x2="1390" y2="499.8" stroke="#9c9c9c" stroke-width="1" opacity="0.35"/>
<line x1="1050" y1="537.0" x2="1390" y2="536.6" stroke="#9c9c9c" stroke-width="1" opacity="0.35"/>
<line x1="1050" y1="602.8" x2="1390" y2="602.2" stroke="#9c9c9c" stroke-width="1" opacity="0.35"/>
<ellipse cx="1218" cy="504" rx="166" ry="17" fill="none" stroke="#1d1dc0" stroke-width="4" opacity="0.35" transform="rotate(-1.5 1218 504)"/>
<rect x="1041" y="488" width="52" height="37" fill="#b01515" opacity="0.45"/>
<rect x="1346" y="480" width="51" height="38" fill="#b01515" opacity="0.45"/>
<path d="M990 509 L1042 476 L1042 539 Z" fill="url(#redc)"/>
<ellipse cx="1041" cy="507.5" rx="3.5" ry="31.5" fill="#1c1c1c"/>
<path d="M1447 497.5 L1397 467 L1397 530 Z" fill="url(#redc)"/>
<ellipse cx="1397.5" cy="498.5" rx="3.5" ry="31.5" fill="#1c1c1c"/>
<rect x="1195" y="320" width="38" height="18" fill="url(#blu)"/>
<rect x="1195" y="337" width="38" height="38" fill="url(#blu)" opacity="0.72"/>
<path d="M1212 267 L1181 321 L1245.5 321 Z" fill="url(#bluc)"/>
<path d="M1181 321 Q1213 318 1245.5 321" stroke="#101050" stroke-width="1.2" fill="none"/>
<path d="M1213 375 L1211 440 L1215.3 580 L1221.3 667 L1224.4 580 L1222.4 440 L1217 375" stroke="#b01818" stroke-width="1.3" fill="none"/>
<circle cx="1218.5" cy="503" r="63" fill="url(#sph)" opacity="0.86"/>
<circle cx="1223.3" cy="481.6" r="26.6" fill="#17b070" opacity="0.85"/>
<circle cx="1223.3" cy="478" r="21" fill="#14a060" opacity="0.6"/>
<circle cx="1223.3" cy="483" r="17" fill="#00d27e" opacity="0.9"/>
<circle cx="1212" cy="529" r="38" fill="#1f8a42" opacity="0.92"/>
<circle cx="1212" cy="521" r="27" fill="#1a7a30" opacity="0.9"/>
<circle cx="1212" cy="527" r="22.8" fill="#13b020"/>
<path d="M1211 440 L1215.3 580 M1222.4 440 L1224.4 580" stroke="#b01818" stroke-width="1" opacity="0.5" fill="none"/>
<line x1="1256.5" y1="460" x2="1256.5" y2="566" stroke="#9c9c9c" stroke-width="1" opacity="0.5"/>
<line x1="1156" y1="476.5" x2="1281" y2="476.5" stroke="#9c9c9c" stroke-width="1" opacity="0.35"/>
<line x1="1156" y1="500.3" x2="1281" y2="500.3" stroke="#9c9c9c" stroke-width="1" opacity="0.35"/>
<line x1="1156" y1="537.3" x2="1281" y2="537.3" stroke="#9c9c9c" stroke-width="1" opacity="0.35"/>
<g opacity="0.85"><path d="M1229 492 L1252 488 L1252 521 L1229 518 Z" fill="#4a8c8c"/><rect x="1250" y="481" width="16" height="46" fill="#5a9c9c"/><rect x="1254" y="486" width="8" height="35" fill="#2f6a6e"/><path d="M1229 500 L1252 497 M1229 510 L1252 508" stroke="#2c5c60" stroke-width="1"/></g>
<rect x="1206" y="623" width="37" height="40" fill="#1e5a8a" opacity="0.55"/>
<ellipse cx="1224" cy="624" rx="18" ry="3" fill="#1a1aa0" opacity="0.8"/>
<path d="M1266 471 L1290 469 L1296 473 L1300 490 L1302 512 L1296 517 L1266 517 L1264 500 Z" fill="#cc8a45" stroke="#5a3810" stroke-width="0.8"/>
<path d="M1268 493 L1296 489 M1268 506 L1298 504" stroke="#5a3810" stroke-width="1.2"/>
<path d="M1323.7 517.5 L1380.7 561.5 L1389.3 550.5 L1332.3 506.5Z" fill="#cc8a45" stroke="#5a3810" stroke-width="0.9"/><path d="M1326.7 513.7 L1383.7 557.7" stroke="#8a5520" stroke-width="1.3"/>
<path d="M1385.8 571.8 L1321.8 615.8 L1330.2 628.2 L1394.2 584.2Z" fill="#cc8a45" stroke="#5a3810" stroke-width="0.9"/><path d="M1388.7 576.1 L1324.7 620.1" stroke="#8a5520" stroke-width="1.3"/>
<rect x="1306" y="632" width="25" height="28" fill="#cc8a45" stroke="#5a3810" stroke-width="0.8"/>
<path d="M1308 652 L1329 652" stroke="#8a5520" stroke-width="1"/>
<circle cx="1318" cy="630" r="18.5" fill="#cc8a45" stroke="#5a3810" stroke-width="1"/>
<path d="M1322 615 L1340 606 L1346 626 L1330 640 Z" fill="#cc8a45" stroke="#5a3810" stroke-width="0.8"/>
<circle cx="1318" cy="630" r="14" fill="none" stroke="#8a5520" stroke-width="0.8" opacity="0.6"/>
<path d="M1374 549 L1400 541 L1417 573 L1402 590 L1380 581 Z" fill="#cc8a45" stroke="#5a3810" stroke-width="0.9"/>
<circle cx="1393" cy="564" r="17.5" fill="#cc8a45" stroke="#5a3810" stroke-width="1"/>
<circle cx="1393" cy="564" r="13" fill="none" stroke="#8a5520" stroke-width="0.8" opacity="0.6"/>
<path d="M1305 485 L1330 488 L1346 512 L1336 528 L1318 520 Z" fill="#cc8a45" stroke="#5a3810" stroke-width="0.9"/>
<circle cx="1318" cy="500" r="18" fill="#cc8a45" stroke="#5a3810" stroke-width="1"/>
<circle cx="1318" cy="500" r="13.5" fill="none" stroke="#8a5520" stroke-width="0.8" opacity="0.6"/>
<circle cx="1317" cy="501" r="0.9" fill="#5a3810"/>
<circle cx="1322" cy="500" r="0.9" fill="#5a3810"/>
<circle cx="1323" cy="505" r="0.9" fill="#5a3810"/>
<circle cx="1318" cy="506" r="0.9" fill="#5a3810"/>
<circle cx="1320" cy="503" r="0.9" fill="#5a3810"/>
<circle cx="1393" cy="565" r="0.9" fill="#5a3810"/>
<circle cx="1398" cy="564" r="0.9" fill="#5a3810"/>
<circle cx="1399" cy="569" r="0.9" fill="#5a3810"/>
<circle cx="1394" cy="570" r="0.9" fill="#5a3810"/>
<circle cx="1396" cy="567" r="0.9" fill="#5a3810"/>
<circle cx="1317" cy="631" r="0.9" fill="#5a3810"/>
<circle cx="1322" cy="630" r="0.9" fill="#5a3810"/>
<circle cx="1323" cy="635" r="0.9" fill="#5a3810"/>
<circle cx="1318" cy="636" r="0.9" fill="#5a3810"/>
<circle cx="1320" cy="633" r="0.9" fill="#5a3810"/>
<path d="M1300 518 Q1360 515 1384 500" stroke="#3a2ad0" stroke-width="4" fill="none" opacity="0.55"/>
</svg>
</body></html>
